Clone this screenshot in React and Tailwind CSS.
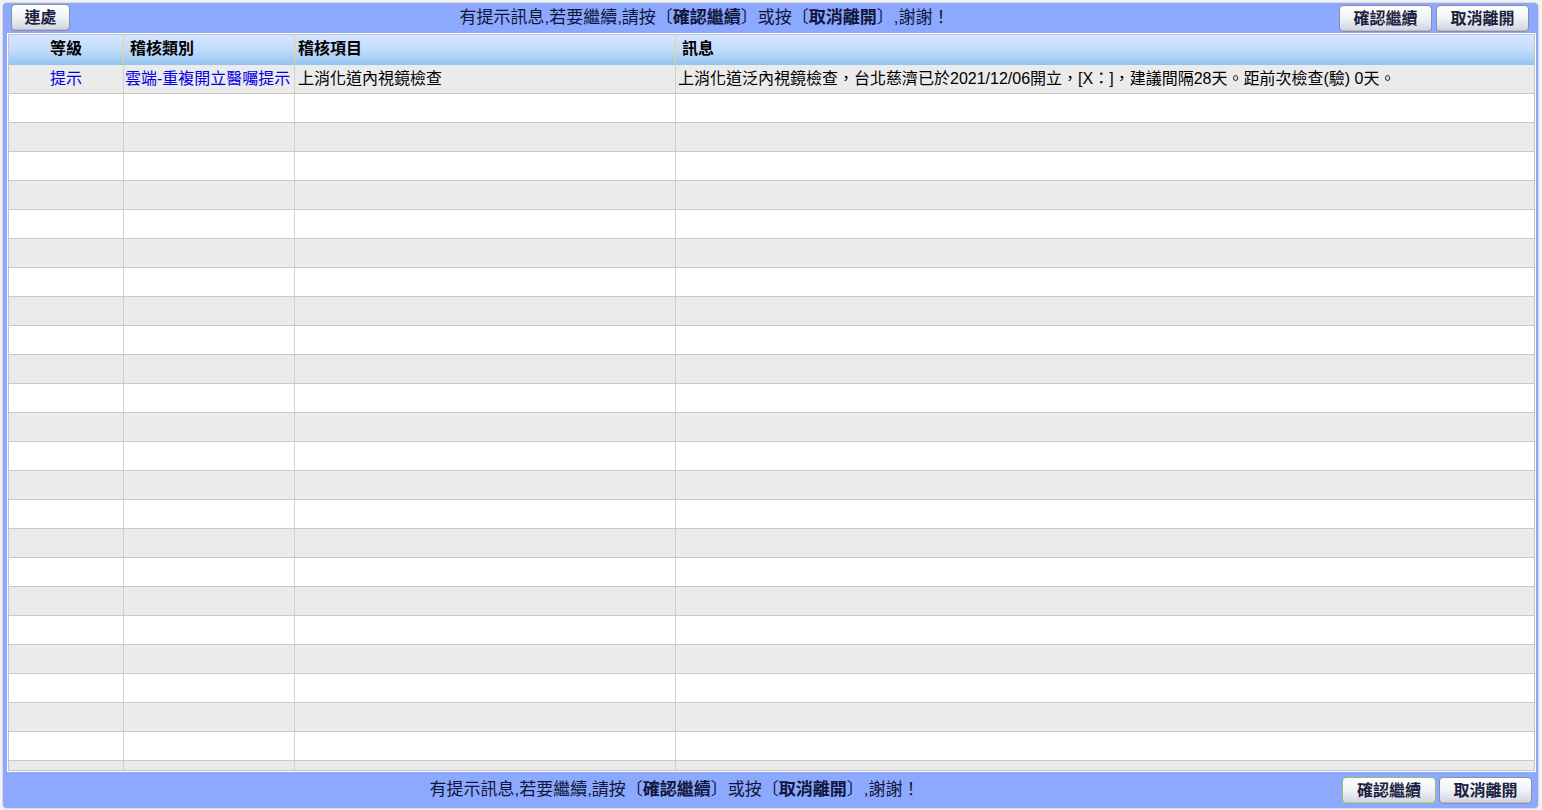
import React from "react";

const FONT = { fontFamily: '"Liberation Sans", "Noto Sans CJK TC", sans-serif' };

function Btn({ children, focus, className = "" }) {
  return (
    <button
      className={
        "h-[27px] rounded-[4px] border bg-gradient-to-b from-[#ffffff] via-[#f1f2f6] to-[#cfd3e0] text-[16px] font-bold leading-none text-[#1a2240] shadow-[inset_0_-1px_0_#b8bccc] " +
        (focus ? "border-[#8fc36a] " : "border-[#8a8fa3] ") +
        className
      }
      style={FONT}
    >
      {children}
    </button>
  );
}

function Title() {
  return (
    <span className="text-[17px] text-[#10163a]" style={FONT}>
      有提示訊息,若要繼續,請按〔<b>確認繼續</b>〕或按〔<b>取消離開</b>〕,謝謝！
    </span>
  );
}

const cols = "grid grid-cols-[115px_171px_381px_1fr]";

export default function App() {
  const rows = Array.from({ length: 25 });
  return (
    <div className="w-[1542px] h-[810px] overflow-hidden bg-[#f3f3f3] pl-[3px] pt-[3px]" style={FONT}>
      <div className="w-[1535px] h-[805px] rounded-[4px] bg-[#8ca8ff] flex flex-col shadow-[0_0_2px_rgba(0,0,0,0.35)]">
        {/* top bar */}
        <div className="h-[30px] flex items-start pl-[8px] pr-[9px] pt-[1px]">
          <Btn className="w-[59px]">連處</Btn>
          <div className="flex-1 text-center leading-[28px]">
            <Title />
          </div>
          <div className="flex gap-[4px] pt-[1px]">
            <Btn className="w-[93px]">確認繼續</Btn>
            <Btn className="w-[93px]">取消離開</Btn>
          </div>
        </div>
        {/* table */}
        <div className="ml-[4px] mr-[2px] h-[739px] border border-white bg-white overflow-hidden">
          <div className="h-full border border-[#c4c4c4] overflow-hidden">
            <div className={cols + " h-[30px] bg-gradient-to-b from-[#d3e6ff] via-[#c4dcfb] to-[#92c3ef] text-[16px] font-bold text-black leading-[28px]"}>
              <div className="text-center border-r border-[#f2cf7e]">等級</div>
              <div className="pl-[6px] border-r border-[#f2cf7e]">稽核類別</div>
              <div className="pl-[3px] border-r border-[#f2cf7e]">稽核項目</div>
              <div className="pl-[6px]">訊息</div>
            </div>
            {rows.map((_, i) => (
              <div
                key={i}
                className={
                  cols +
                  " h-[29px] border-b border-[#c8c8c8] text-[16px] leading-[28px] whitespace-nowrap " +
                  (i % 2 === 0 ? "bg-[#ebebeb]" : "bg-white")
                }
              >
                <div className="text-center border-r border-[#d0d0d0] text-[#0000e6]">{i === 0 ? "提示" : ""}</div>
                <div className="pl-[1px] border-r border-[#d0d0d0] text-[#0000e6] overflow-hidden">
                  {i === 0 ? "雲端-重複開立醫囑提示" : ""}
                </div>
                <div className="pl-[3px] border-r border-[#d0d0d0] text-black">{i === 0 ? "上消化道內視鏡檢查" : ""}</div>
                <div className="pl-[2px] text-black">
                  {i === 0 ? "上消化道泛內視鏡檢查，台北慈濟已於2021/12/06開立，[X：]，建議間隔28天。距前次檢查(驗) 0天。" : ""}
                </div>
              </div>
            ))}
          </div>
        </div>
        {/* bottom bar */}
        <div className="flex-1 flex items-center pl-[4px] pr-[6px]">
          <div className="flex-1 text-center leading-[28px]">
            <Title />
          </div>
          <div className="flex gap-[3px] pt-[1px]">
            <Btn focus className="w-[94px]">確認繼續</Btn>
            <Btn className="w-[93px]">取消離開</Btn>
          </div>
        </div>
      </div>
    </div>
  );
}
